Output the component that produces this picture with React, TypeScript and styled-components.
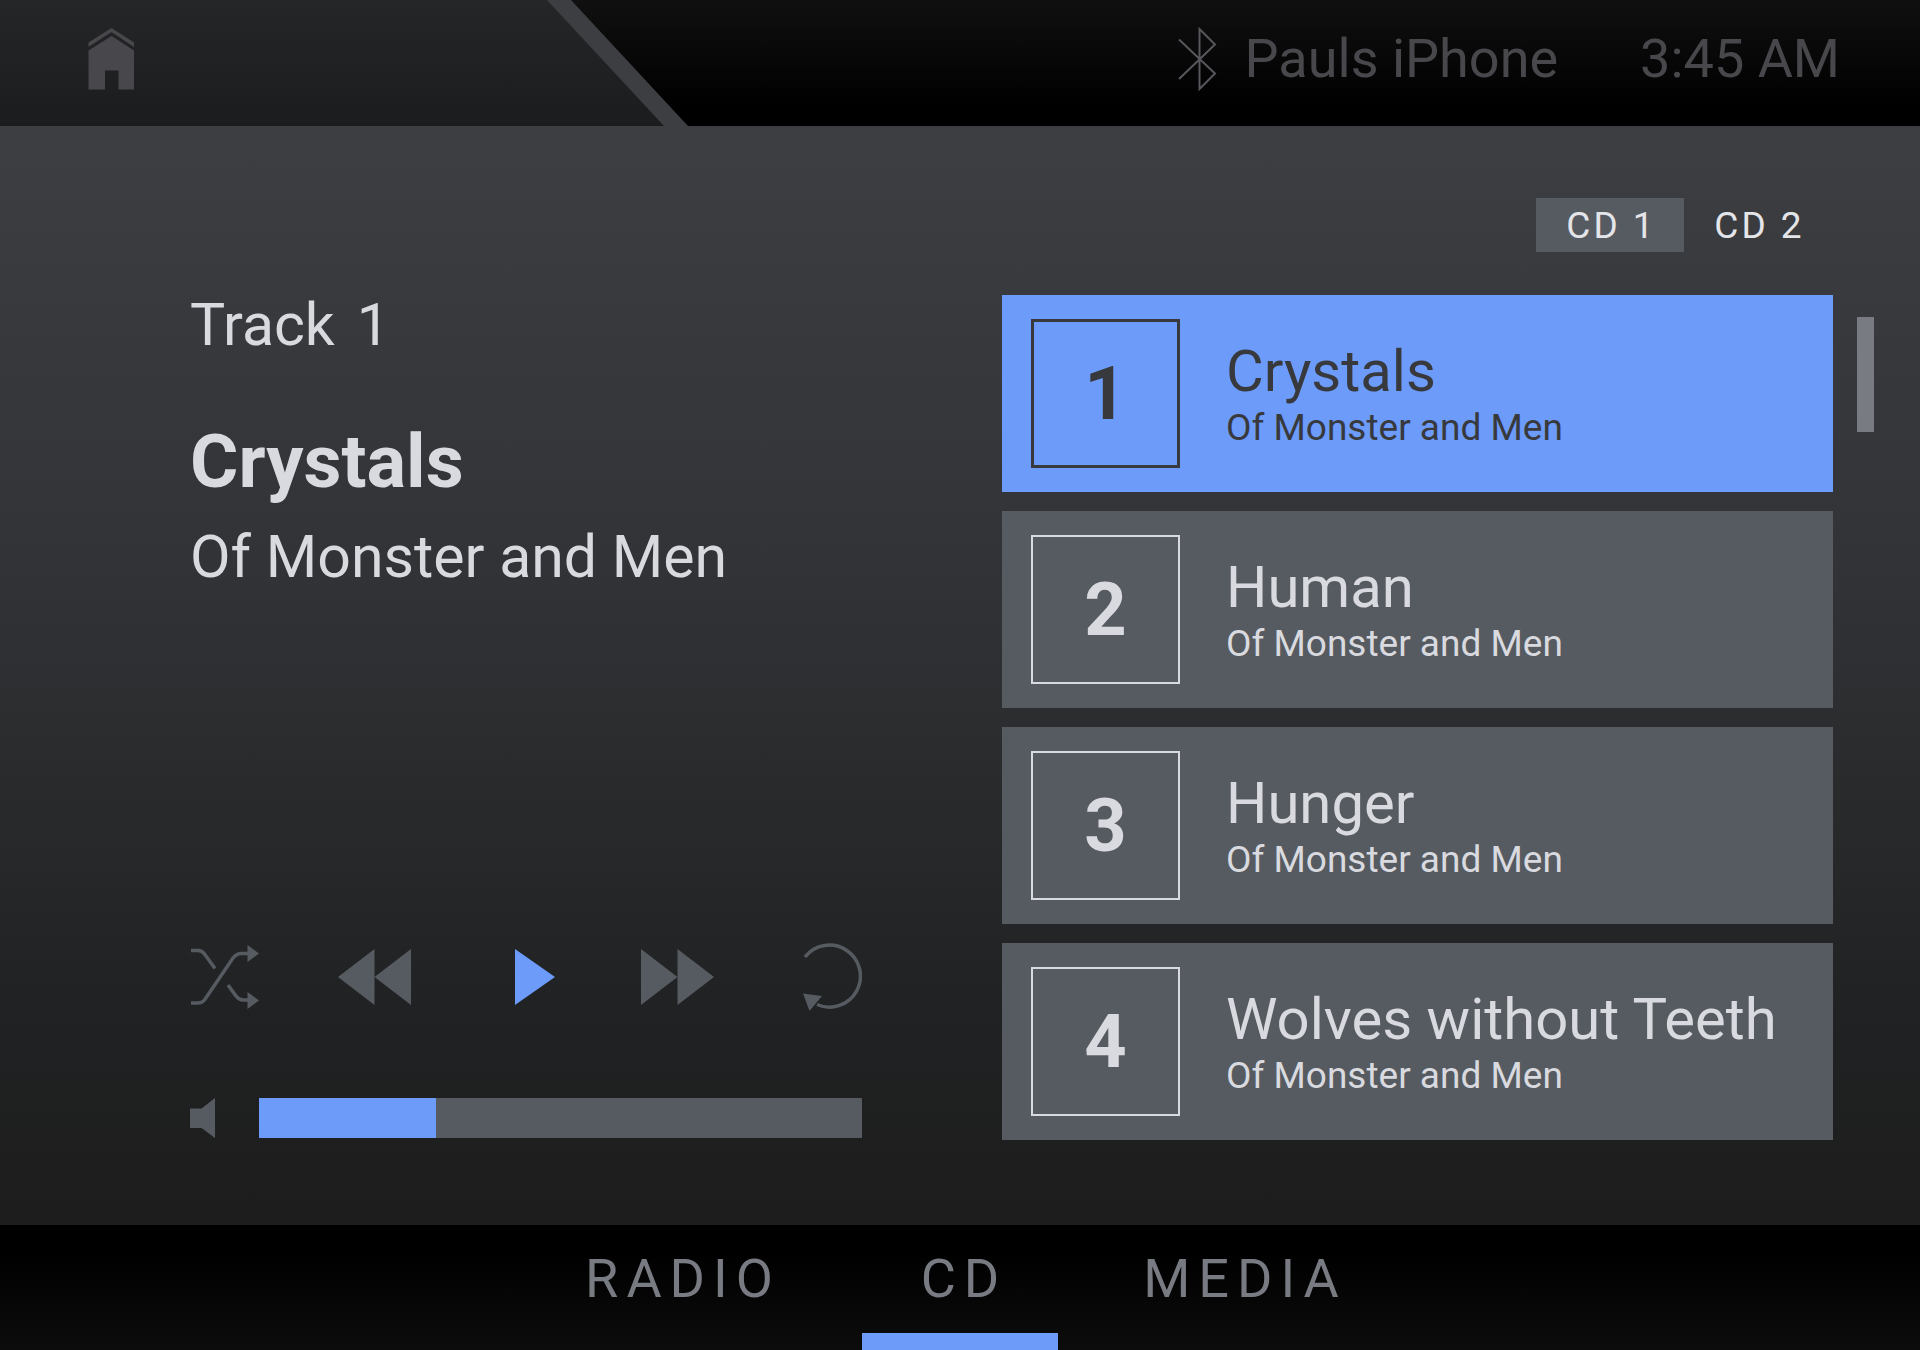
import React, { useState } from "react";
import styled, { createGlobalStyle } from "styled-components";

const color = {
  accent: "#6c9bfa",
  panel: "#565a61",
  light: "#d9dadf",
  dark: "#38393c",
  dim: "#48474b",
  muted: "#797b83",
  edge: "#3d3e42",
};

const GlobalStyle = createGlobalStyle`
  *, *::before, *::after { box-sizing: border-box; }
  body {
    margin: 0;
    background: #000;
    font-family: Roboto, "Liberation Sans", sans-serif;
  }
  button {
    margin: 0;
    padding: 0;
    border: 0;
    background: none;
    color: inherit;
    font: inherit;
    cursor: pointer;
  }
  h1, p, ol { margin: 0; padding: 0; font-weight: 400; }
  svg { display: block; }
`;

const Screen = styled.div`
  min-height: 100vh;
  display: flex;
  flex-direction: column;
`;

const Header = styled.header`
  height: 126px;
  display: flex;
  justify-content: space-between;
  background: linear-gradient(#101010, #000 85%);
`;

const HeaderEdge = styled.div`
  width: 688px;
  padding-right: 24px;
  background: ${color.edge};
  clip-path: polygon(0 0, calc(100% - 117px) 0, 100% 100%, 0 100%);
`;

const HomePanel = styled.div`
  height: 100%;
  padding: 28px 88px;
  background: linear-gradient(#252628, #1b1c1d);
  clip-path: polygon(0 0, calc(100% - 117px) 0, 100% 100%, 0 100%);
`;

const Status = styled.div`
  display: flex;
  align-items: center;
  padding: 0 80px 8px 0;
  color: ${color.dim};
  font-size: 54px;
  line-height: 70px;
  white-space: nowrap;
`;

const Device = styled.span`
  margin: 0 82px 0 28px;
`;

const Main = styled.main`
  flex: 1;
  display: grid;
  grid-template-columns: minmax(0, 672fr) minmax(0, 872fr);
  column-gap: 140px;
  padding: 72px 46px 85px 190px;
  color: ${color.light};
  background: linear-gradient(${color.edge}, #323336 40%, #202122 82%, #1d1d1d);
`;

const Player = styled.section`
  display: flex;
  flex-direction: column;
  padding-top: 92px;
  font-size: 59px;
  line-height: 70px;
`;

const TrackLabel = styled.p`
  display: flex;
  gap: 22px;
`;

const NowTitle = styled.h1`
  margin-top: 60px;
  font-size: 74px;
  line-height: 84px;
  font-weight: 700;
`;

const NowArtist = styled.p`
  margin-top: 18px;
`;

const Transport = styled.div`
  display: flex;
  justify-content: space-between;
  align-items: center;
  margin-top: auto;
  margin-bottom: 84px;
`;

const TransportButton = styled.button<{ $active?: boolean }>`
  color: ${(p) => (p.$active ? color.accent : color.panel)};
`;

const Volume = styled.label`
  display: flex;
  align-items: center;
  gap: 44px;
  height: 44px;
  color: ${color.panel};
`;

const VolumeSlider = styled.input`
  flex: 1;
  min-width: 0;
  height: 40px;
  margin: 0;
  appearance: none;
  cursor: pointer;
  &::-webkit-slider-thumb {
    appearance: none;
    width: 1px;
    height: 40px;
    background: transparent;
  }
`;

const Library = styled.section`
  display: flex;
  flex-direction: column;
`;

const Discs = styled.div`
  display: flex;
  justify-content: flex-end;
  margin: 0 42px 43px 0;
`;

const DiscButton = styled.button<{ $active: boolean }>`
  width: 148px;
  height: 54px;
  background: ${(p) => (p.$active ? color.panel : "transparent")};
  color: #e4e5e9;
  font-size: 37px;
  letter-spacing: 3px;
  text-indent: 3px;
`;

const ListArea = styled.div`
  display: flex;
  gap: 24px;
`;

const TrackList = styled.ol`
  flex: 1;
  min-width: 0;
  display: flex;
  flex-direction: column;
  gap: 19px;
  list-style: none;
`;

const TrackButton = styled.button<{ $active: boolean }>`
  width: 100%;
  height: 197px;
  display: flex;
  align-items: center;
  gap: 46px;
  padding: 0 29px;
  text-align: left;
  background: ${(p) => (p.$active ? color.accent : color.panel)};
  color: ${(p) => (p.$active ? color.dark : color.light)};
`;

const TrackNumber = styled.span<{ $active: boolean }>`
  flex: none;
  width: 149px;
  height: 149px;
  display: flex;
  align-items: center;
  justify-content: center;
  border: ${(p) => (p.$active ? "3px" : "2px")} solid currentColor;
  font-size: 74px;
  font-weight: 700;
`;

const TrackText = styled.span`
  display: flex;
  flex-direction: column;
  white-space: nowrap;
`;

const TrackTitle = styled.span`
  font-size: 58px;
  line-height: 68px;
`;

const TrackArtist = styled.span`
  font-size: 37px;
  line-height: 46px;
`;

const ScrollTrack = styled.div`
  width: 17px;
  padding-top: 22px;
`;

const ScrollThumb = styled.div`
  height: 115px;
  background: ${color.muted};
`;

const Footer = styled.nav`
  height: 125px;
  display: flex;
  justify-content: center;
  background: linear-gradient(#000 20%, #0c0c0c);
`;

const SourceButton = styled.button`
  width: 281px;
  display: flex;
  flex-direction: column;
  align-items: center;
  color: ${color.muted};
  font-size: 54px;
  line-height: 108px;
  letter-spacing: 8px;
  text-indent: 8px;
`;

const SourceMarker = styled.span`
  width: 196px;
  height: 17px;
  background: ${color.accent};
`;

const HomeIcon = () => (
  <svg width="47" height="62" viewBox="0 0 47 62" fill={color.dim} aria-hidden="true">
    <path d="M23.5 0 46 14.5v4.500L23.500 4 .5 19v-4.500z" />
    <path d="M23.500 8 46 22.500V61.500H30.500V42.500H17V61.500H.5V22.500z" />
  </svg>
);

const BluetoothIcon = () => (
  <svg width="39" height="64" viewBox="0 0 39 64" fill="none" stroke="#57575d" strokeWidth="2" aria-label="Bluetooth" role="img">
    <path d="M1 12.500 37 46.500 21.500 62V2L37 17.500 1 52" />
  </svg>
);

const ShuffleIcon = () => (
  <svg width="69" height="66" viewBox="0 0 69 66" fill="none" stroke="currentColor" strokeWidth="3.5" aria-hidden="true">
    <path d="M1 6.500H8Q12 6.500 14.500 10L25 24.500" />
    <path d="M1 59H8Q12 59 14.500 56L43 14Q47 9.500 51 9.500H58" />
    <path d="M38 41 46 52Q49 56 53 56H58" />
    <path d="M57.500 1 69 9.500 57.500 18zM57.500 48 69 56.500 57.500 65z" fill="currentColor" stroke="none" />
  </svg>
);

const RewindIcon = () => (
  <svg width="73" height="56" viewBox="0 0 73 56" fill="currentColor" aria-hidden="true">
    <path d="M0 28 36.500 0V56zM36.500 28 73 0V56z" />
  </svg>
);

const PlayIcon = () => (
  <svg width="73" height="56" viewBox="-25 0 73 56" fill="currentColor" aria-hidden="true">
    <path d="M0 0 40 28 0 56z" />
  </svg>
);

const ForwardIcon = () => (
  <svg width="73" height="56" viewBox="0 0 73 56" fill="currentColor" aria-hidden="true">
    <path d="M0 0 36.500 28 0 56zM36.500 0 73 28 36.500 56z" />
  </svg>
);

const RepeatIcon = () => (
  <svg width="69" height="70" viewBox="-10 0 69 70" fill="none" aria-hidden="true">
    <path d="M2 15A31 31 0 1 1 14 62.500" stroke="currentColor" strokeWidth="3.500" />
    <path d="M0 51.500 19 54 6.500 69z" fill="currentColor" />
  </svg>
);

const SpeakerIcon = () => (
  <svg width="25" height="40" viewBox="0 0 25 40" fill="currentColor" aria-hidden="true">
    <path d="M0 10.500H11.500L25 0V40L11.500 30H0z" />
  </svg>
);

const tracks = [
  { title: "Crystals", artist: "Of Monster and Men" },
  { title: "Human", artist: "Of Monster and Men" },
  { title: "Hunger", artist: "Of Monster and Men" },
  { title: "Wolves without Teeth", artist: "Of Monster and Men" },
];

const discs = ["CD 1", "CD 2"];
const sources = ["RADIO", "CD", "MEDIA"];
const maxVolume = 1000;

export default function App() {
  const [current, setCurrent] = useState(0);
  const [disc, setDisc] = useState("CD 1");
  const [source, setSource] = useState("CD");
  const [volume, setVolume] = useState(293);

  const step = (by: number) => setCurrent((current + by + tracks.length) % tracks.length);
  const level = (volume / maxVolume) * 100;

  return (
    <Screen>
      <GlobalStyle />
      <Header>
        <HeaderEdge>
          <HomePanel>
            <button aria-label="Home"><HomeIcon /></button>
          </HomePanel>
        </HeaderEdge>
        <Status>
          <BluetoothIcon />
          <Device>Pauls iPhone</Device>
          <time>3:45 AM</time>
        </Status>
      </Header>

      <Main>
        <Player aria-label="Now playing">
          <TrackLabel>
            <span>Track</span>
            <span>{current + 1}</span>
          </TrackLabel>
          <NowTitle>{tracks[current].title}</NowTitle>
          <NowArtist>{tracks[current].artist}</NowArtist>
          <Transport>
            <TransportButton aria-label="Shuffle"><ShuffleIcon /></TransportButton>
            <TransportButton aria-label="Previous track" onClick={() => step(-1)}><RewindIcon /></TransportButton>
            <TransportButton aria-label="Play" $active><PlayIcon /></TransportButton>
            <TransportButton aria-label="Next track" onClick={() => step(1)}><ForwardIcon /></TransportButton>
            <TransportButton aria-label="Repeat"><RepeatIcon /></TransportButton>
          </Transport>
          <Volume>
            <SpeakerIcon />
            <VolumeSlider
              type="range"
              min={0}
              max={maxVolume}
              value={volume}
              aria-label="Volume"
              onChange={(e) => setVolume(Number(e.target.value))}
              style={{ background: `linear-gradient(to right, ${color.accent} ${level}%, ${color.panel} ${level}%)` }}
            />
          </Volume>
        </Player>

        <Library aria-label="Tracks">
          <Discs>
            {discs.map((name) => (
              <DiscButton key={name} $active={name === disc} aria-pressed={name === disc} onClick={() => setDisc(name)}>
                {name}
              </DiscButton>
            ))}
          </Discs>
          <ListArea>
            <TrackList>
              {tracks.map((track, i) => (
                <li key={track.title}>
                  <TrackButton $active={i === current} onClick={() => setCurrent(i)}>
                    <TrackNumber $active={i === current}>{i + 1}</TrackNumber>
                    <TrackText>
                      <TrackTitle>{track.title}</TrackTitle>
                      <TrackArtist>{track.artist}</TrackArtist>
                    </TrackText>
                  </TrackButton>
                </li>
              ))}
            </TrackList>
            <ScrollTrack>
              <ScrollThumb />
            </ScrollTrack>
          </ListArea>
        </Library>
      </Main>

      <Footer aria-label="Sources">
        {sources.map((name) => (
          <SourceButton key={name} aria-pressed={name === source} onClick={() => setSource(name)}>
            <span>{name}</span>
            {name === source && <SourceMarker />}
          </SourceButton>
        ))}
      </Footer>
    </Screen>
  );
}
